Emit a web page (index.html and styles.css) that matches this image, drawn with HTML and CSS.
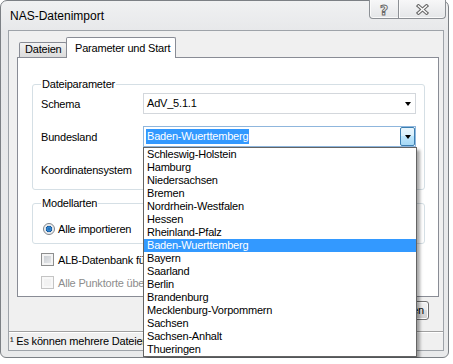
FILE: index.html
```html
<!DOCTYPE html>
<html>
    <head>
        <meta charset="UTF-8">
        <meta name="viewport" content="width=device-width, initial-scale=1.0">
        <title>NAS-Datenimport</title>
        <link rel="stylesheet" href="styles.css">
    </head>

    <body>
        <div class="window">
            <div class="titlebar">
                <span class="title">NAS-Datenimport</span>
                <div class="caption">
                    <div class="cap-btn help">?</div>
                    <div class="cap-btn close">
                        <svg width="13" height="11" viewBox="0 0 13 11">
                            <path d="M2.5 2 L10.5 9 M10.5 2 L2.5 9" stroke="#6b6b6b" stroke-width="3.6" stroke-linecap="square" fill="none"/>
                            <path d="M2.5 2 L10.5 9 M10.5 2 L2.5 9" stroke="#fff" stroke-width="1.4" stroke-linecap="square" fill="none"/>
                        </svg>
                    </div>
                </div>
            </div>

            <div class="client">
                <div class="tabs">
                    <div class="tab">Dateien</div>
                    <div class="tab active">Parameter und Start</div>
                </div>

                <div class="panel">
                    <fieldset class="group files">
                        <legend>Dateiparameter</legend>
                        <div class="row">
                            <label>Schema</label>
                            <div class="combo">
                                <span class="value">AdV_5.1.1</span>
                                <span class="drop"><i class="arrow"></i></span>
                            </div>
                        </div>
                        <div class="row">
                            <label>Bundesland</label>
                            <div class="combo hot">
                                <span class="value"><span class="selected">Baden-Wuerttemberg</span></span>
                                <span class="drop"><i class="arrow"></i></span>
                                <div class="list">
                                    <div class="item">Schleswig-Holstein</div>
                                    <div class="item">Hamburg</div>
                                    <div class="item">Niedersachsen</div>
                                    <div class="item">Bremen</div>
                                    <div class="item">Nordrhein-Westfalen</div>
                                    <div class="item">Hessen</div>
                                    <div class="item">Rheinland-Pfalz</div>
                                    <div class="item current">Baden-Wuerttemberg</div>
                                    <div class="item">Bayern</div>
                                    <div class="item">Saarland</div>
                                    <div class="item">Berlin</div>
                                    <div class="item">Brandenburg</div>
                                    <div class="item">Mecklenburg-Vorpommern</div>
                                    <div class="item">Sachsen</div>
                                    <div class="item">Sachsen-Anhalt</div>
                                    <div class="item">Thueringen</div>
                                </div>
                            </div>
                        </div>
                        <div class="row">
                            <label>Koordinatensystem</label>
                            <div class="combo">
                                <span class="value"></span>
                                <span class="drop"><i class="arrow"></i></span>
                            </div>
                        </div>
                    </fieldset>

                    <fieldset class="group models">
                        <legend>Modellarten</legend>
                        <div class="check-row">
                            <span class="radio"></span>
                            <span>Alle importieren</span>
                        </div>
                    </fieldset>

                    <div class="check-row first">
                        <span class="checkbox"></span>
                        <span>ALB-Datenbank füllen</span>
                    </div>
                    <div class="check-row disabled">
                        <span class="checkbox"></span>
                        <span>Alle Punktorte übernehmen</span>
                    </div>
                </div>

                <div class="buttons">
                    <div class="button">Import starten</div>
                </div>

                <div class="statusbar">¹ Es können mehrere Dateien ausgewählt werden.</div>
            </div>
        </div>
    </body>
</html>
```

FILE: styles.css
```css
body {
    margin: 0;
    background-color: #fff;
    font-family: "Liberation Sans", Arial, sans-serif;
    font-size: 11px;
    color: #000;
}
.window {
    width: 449px;
    height: 358px;
    box-sizing: border-box;
    border: 1px solid #7c8085;
    border-radius: 7px 7px 6px 6px;
    background: linear-gradient(#f0f1f2, #e7e8ea 30px, #e9eaeb);
    padding: 0 4px 6px 7px;
    display: flex;
    flex-direction: column;
}
.titlebar {
    height: 29px;
    display: flex;
    align-items: flex-start;
    flex-shrink: 0;
}
.title {
    font-size: 12px;
    line-height: 14px;
    padding: 8px 0 0 2px;
}
.caption {
    display: flex;
    margin-left: auto;
    margin-right: -2px;
    margin-top: -1px;
}
.cap-btn {
    height: 19px;
    box-sizing: border-box;
    border: 1px solid #8c9095;
    border-top: none;
    background: linear-gradient(#f7f7f8, #e4e6e8);
    display: flex;
    align-items: center;
    justify-content: center;
    box-shadow: inset 0 -1px 0 #fafafa, inset 1px 0 0 #fafafa;
}
.help {
    width: 30px;
    border-radius: 0 0 0 4px;
    font-family: "DejaVu Sans", sans-serif;
    font-size: 14px;
    font-weight: bold;
    color: #fff;
    -webkit-text-stroke: 1px #6b6b6b;
    padding-top: 1px;
}
.close {
    width: 47px;
    border-left: none;
    border-radius: 0 0 4px 0;
}
.client {
    flex: 1;
    background-color: #f0f0f0;
    border: 1px solid #9ea3a9;
    display: flex;
    flex-direction: column;
    letter-spacing: -0.2px;
}
.tabs {
    display: flex;
    align-items: flex-end;
    margin: 6px 0 0 10px;
    height: 20px;
}
.tab {
    box-sizing: border-box;
    width: 48px;
    height: 15px;
    line-height: 13px;
    padding-left: 5px;
    border: 1px solid #898c95;
    border-bottom: none;
    background: linear-gradient(#f3f3f3, #e6e6e6 50%, #dcdcdc);
    border-radius: 2px 2px 0 0;
}
.tab.active {
    width: 110px;
    height: 21px;
    margin-left: -1px;
    margin-bottom: -1px;
    padding: 4px 0 0 8px;
    background: #fff;
    position: relative;
    z-index: 1;
}
.panel {
    height: 240px;
    box-sizing: border-box;
    margin: 0 4px 0 8px;
    border: 1px solid #898c95;
    background-color: #fff;
    padding-top: 1px;
}
.group {
    margin: 0 13px 0 14px;
    padding: 2px 8px 9px 8px;
    border: 1px solid #d5dfe5;
    border-radius: 3px;
    min-width: 0;
}
.group legend {
    padding: 0 1px;
    line-height: 13px;
}
.files {
    margin-top: 19px;
}
.models {
    margin-top: 7px;
    padding-top: 12px;
    padding-bottom: 8px;
}
.row {
    display: flex;
    align-items: center;
    height: 21px;
}
.row + .row {
    margin-top: 12px;
}
.row label {
    width: 102px;
}
.combo {
    position: relative;
    flex: 1;
    height: 21px;
    box-sizing: border-box;
    border: 1px solid #d3d7dc;
    background-color: #fff;
    display: flex;
    align-items: center;
}
.combo .value {
    flex: 1;
    padding-left: 3px;
    line-height: 15px;
    white-space: nowrap;
    overflow: hidden;
}
.combo .drop {
    width: 15px;
    height: 19px;
    box-sizing: border-box;
    display: flex;
    align-items: center;
    justify-content: center;
}
.arrow {
    width: 0;
    height: 0;
    border-left: 3.5px solid transparent;
    border-right: 3.5px solid transparent;
    border-top: 4px solid #000;
}
.combo.hot {
    border-color: #8fb6dd;
}
.combo.hot .value {
    padding-left: 2px;
}
.selected {
    background-color: #3399ff;
    color: #fff;
    padding: 0 1px;
    display: inline-block;
    line-height: 15px;
}
.combo.hot .drop {
    border: 1px solid #3c7fb1;
    border-radius: 2px;
    background: linear-gradient(#eaf6fd, #d9f0fc 45%, #bee6fd 50%, #a7d9f5);
}
.list {
    position: absolute;
    left: -1px;
    top: 20px;
    width: 274px;
    box-sizing: border-box;
    border: 1px solid #646464;
    background-color: #fff;
    box-shadow: 3px 3px 3px rgba(0, 0, 0, 0.35);
    z-index: 5;
}
.item {
    height: 13px;
    line-height: 13px;
    padding-left: 3px;
}
.item.current {
    background-color: #3399ff;
    color: #fff;
}
.check-row {
    display: flex;
    align-items: center;
    height: 13px;
    gap: 4px;
}
.check-row.first {
    margin: 9px 0 0 23px;
}
.check-row.disabled {
    margin: 10px 0 0 23px;
    color: #8d8d8d;
}
.models .check-row {
    margin-left: 2px;
    gap: 3px;
}
.radio {
    width: 12px;
    height: 12px;
    box-sizing: border-box;
    border-radius: 50%;
    border: 1px solid #7d8288;
    background: radial-gradient(circle, #1e66ad 0, #3b8ed6 2px, #0d4f93 3px, #dfe3e7 3.5px, #f6f6f6 5px);
}
.checkbox {
    width: 13px;
    height: 13px;
    box-sizing: border-box;
    border: 1px solid #8e8f8f;
    background: linear-gradient(135deg, #c2c6cb, #eef0f2);
    box-shadow: inset 0 0 0 2px #f4f4f4;
}
.disabled .checkbox {
    border-color: #c4c4c4;
    background: #f2f2f2;
    box-shadow: inset 0 0 0 2px #f8f8f8;
}
.buttons {
    display: flex;
    justify-content: flex-end;
    margin: 4px 14px 0 0;
}
.button {
    width: 75px;
    height: 19px;
    box-sizing: border-box;
    border: 1px solid #707070;
    border-radius: 3px;
    background: linear-gradient(#f2f2f2, #ebebeb 50%, #dddddd 50%, #cfcfcf);
    box-shadow: inset 0 0 0 1px #fcfcfc;
    text-align: center;
    line-height: 17px;
}
.statusbar {
    margin-top: auto;
    height: 18px;
    border-top: 1px solid #a0a0a0;
    box-shadow: inset 0 1px 0 #fff;
    line-height: 18px;
    padding-left: 1px;
    white-space: nowrap;
    overflow: hidden;
}
```
